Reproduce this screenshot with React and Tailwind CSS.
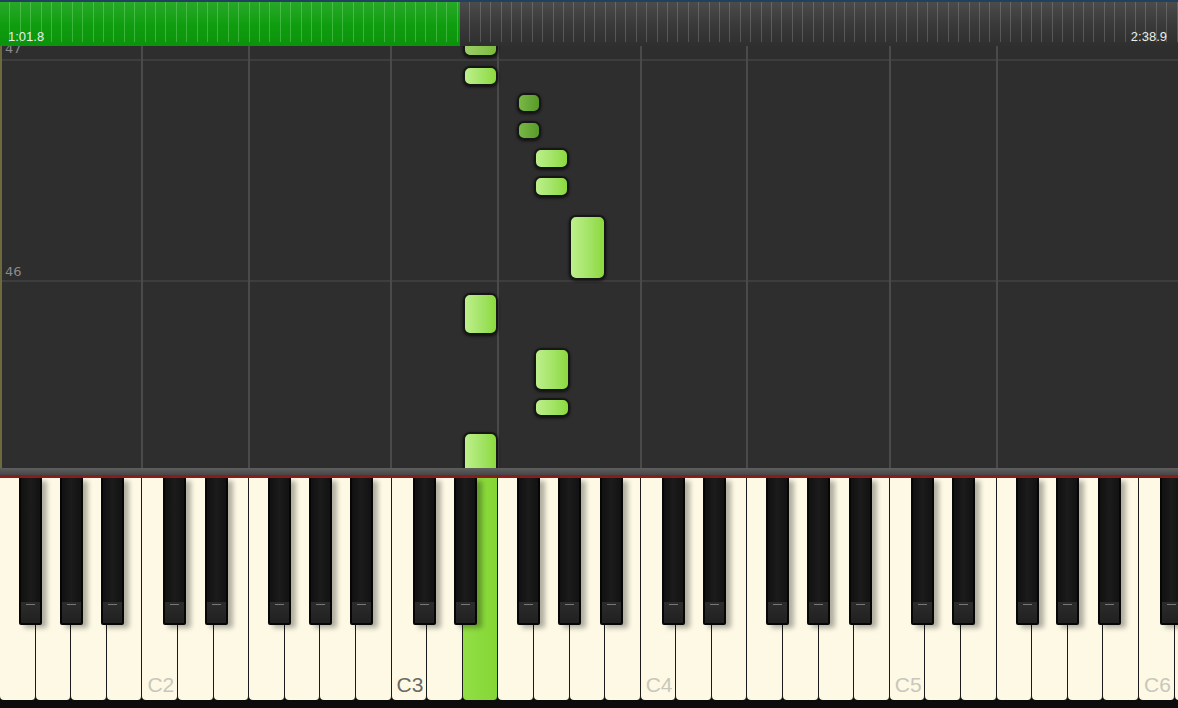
import React from 'react';

const WHITE_NAMES = ['F', 'G', 'A', 'B', 'C', 'D', 'E'];

// black key offset inside the white key it follows
const BLACK_OFFSET = {
  C: 'left-[21px]',
  D: 'left-[27px]',
  F: 'left-[19px]',
  G: 'left-[24px]',
  A: 'left-[30px]',
};

const LABEL_COLOR = {
  2: 'text-[#c9c7bb]',
  3: 'text-[#6b6a62]',
  4: 'text-[#c9c7bb]',
  5: 'text-[#c9c7bb]',
  6: 'text-[#c9c7bb]',
};

const keys = Array.from({ length: 34 }, (_, i) => {
  const name = WHITE_NAMES[i % 7];
  const octave = 1 + Math.floor((i + 3) / 7);
  return { id: `${name}${octave}`, name, octave };
});

// falling notes on the roll (white keys light, black keys dark)
const notes = [
  { id: 1, cls: 'left-[463px] top-[-10px] h-[21px] w-[35px]', dim: true },
  { id: 2, cls: 'left-[463px] top-[20px] h-[20px] w-[35px]' },
  { id: 3, cls: 'left-[517px] top-[47px] h-[20px] w-[24px]', sharp: true },
  { id: 4, cls: 'left-[517px] top-[75px] h-[19px] w-[24px]', sharp: true },
  { id: 5, cls: 'left-[534px] top-[102px] h-[21px] w-[35px]' },
  { id: 6, cls: 'left-[534px] top-[130px] h-[21px] w-[35px]' },
  { id: 7, cls: 'left-[569px] top-[169px] h-[65px] w-[37px]' },
  { id: 8, cls: 'left-[463px] top-[247px] h-[42px] w-[35px]' },
  { id: 9, cls: 'left-[534px] top-[302px] h-[43px] w-[36px]' },
  { id: 10, cls: 'left-[534px] top-[352px] h-[19px] w-[36px]' },
  { id: 11, cls: 'left-[463px] top-[386px] h-[44px] w-[35px]' },
];

const vLines = [
  'left-[141px]', 'left-[248px]', 'left-[390px]', 'left-[497px]',
  'left-[640px]', 'left-[746px]', 'left-[889px]', 'left-[996px]',
];

const Timeline = () => (
  <div className="relative h-[46px] flex-none border-t-2 border-[#22405f]">
    <div className="flex h-full">
      <div className="h-full w-[460px] flex-none bg-linear-to-b from-[#27a827] via-[#0f9e0f] to-[#0b930b]">
        <div className="h-[40px] bg-[repeating-linear-gradient(90deg,transparent_0,transparent_9.4px,rgba(130,220,130,0.4)_9.4px,rgba(130,220,130,0.4)_10.4px)]" />
      </div>
      <div className="h-full flex-1 bg-linear-to-b from-[#4b4b4b] via-[#3a3a3a] to-[#2f2f2f]">
        <div className="h-[40px] bg-[repeating-linear-gradient(90deg,transparent_0,transparent_9.4px,rgba(190,190,190,0.25)_9.4px,rgba(190,190,190,0.25)_10.4px)]" />
      </div>
    </div>
    <div className="absolute inset-x-0 bottom-[3px] flex justify-between px-[8px] font-['Liberation_Sans',sans-serif] text-[13px] leading-none text-[#e6eee6]">
      <span>1:01.8</span>
      <span className="pr-[3px]">2:38.9</span>
    </div>
  </div>
);

const Note = ({ cls, sharp, dim }) => {
  const fill = sharp
    ? 'from-[#78b845] to-[#5a9a28]'
    : dim
      ? 'from-[#9ccf68] to-[#7cbb3c]'
      : 'from-[#bdf08c] to-[#8cd93c]';
  return (
    <div
      className={`absolute ${cls} rounded-[7px] border-2 border-[#161616] bg-linear-to-r ${fill} shadow-[0_1px_3px_rgba(0,0,0,0.7)]`}
    />
  );
};

const Roll = () => (
  <div className="relative h-[422px] flex-none overflow-hidden bg-[#2e2e2e]">
    <div className="absolute left-0 right-0 top-[13px] h-[2px] bg-[#3d3d3d]" />
    <div className="absolute left-0 right-0 top-[234px] h-[2px] bg-[#3d3d3d]" />
    {vLines.map((l) => (
      <div key={l} className={`absolute top-0 bottom-0 w-[2px] bg-[#4a4a4a] ${l}`} />
    ))}
    <div className="absolute top-0 bottom-0 left-0 w-[2px] bg-[#6d6a3f]" />
    <span className="absolute left-[5px] top-[-7px] font-['DejaVu_Sans',sans-serif] text-[13px] text-[#8a8a8a]">47</span>
    <span className="absolute left-[5px] top-[216px] font-['DejaVu_Sans',sans-serif] text-[13px] text-[#8a8a8a]">46</span>
    {notes.map((n) => (
      <Note key={n.id} {...n} />
    ))}
  </div>
);

const BlackKey = ({ pos }) => (
  <div className={`absolute top-0 ${pos} z-10 flex h-[147px] w-[23px] flex-col rounded-b-[2px] bg-[#060606] px-[2px] pb-[2px] shadow-[5px_3px_5px_rgba(0,0,0,0.3)]`}>
    <div className="h-[124px] flex-none bg-linear-to-r from-[#111] via-[#1b1b1b] to-[#121212]" />
    <div className="flex flex-1 flex-col items-center bg-linear-to-b from-[#2c2c2c] to-[#202020] pt-[2px]">
      <div className="h-[1px] w-[9px] bg-[#777]" />
    </div>
  </div>
);

const Keyboard = () => (
  <div className="h-[230px] flex-none overflow-hidden bg-[#0c0c0c]">
    <div className="flex h-[222px]">
      {keys.map((k) => {
        const pressed = k.id === 'E3';
        return (
          <div
            key={k.id}
            className={`relative flex h-full w-[35.6px] flex-none flex-col justify-end rounded-b-[4px] border-r-[1.5px] border-[#1b1b1b] pb-[5px] pl-[5px] ${
              pressed ? 'bg-linear-to-r from-[#92df45] to-[#84d634]' : 'bg-[#fdf9e5]'
            }`}
          >
            {k.name === 'C' && (
              <span className={`font-['Liberation_Sans',sans-serif] text-[21px] leading-none ${LABEL_COLOR[k.octave]}`}>
                {k.id}
              </span>
            )}
            {BLACK_OFFSET[k.name] && <BlackKey pos={BLACK_OFFSET[k.name]} />}
          </div>
        );
      })}
    </div>
  </div>
);

export default function App() {
  return (
    <div className="flex h-[708px] w-[1178px] flex-col overflow-hidden bg-[#2e2e2e]">
      <Timeline />
      <Roll />
      <div className="h-[7px] flex-none bg-linear-to-b from-[#5f5f5f] to-[#474747]" />
      <div className="h-[3px] flex-none bg-[#8a1c1c]" />
      <Keyboard />
    </div>
  );
}
